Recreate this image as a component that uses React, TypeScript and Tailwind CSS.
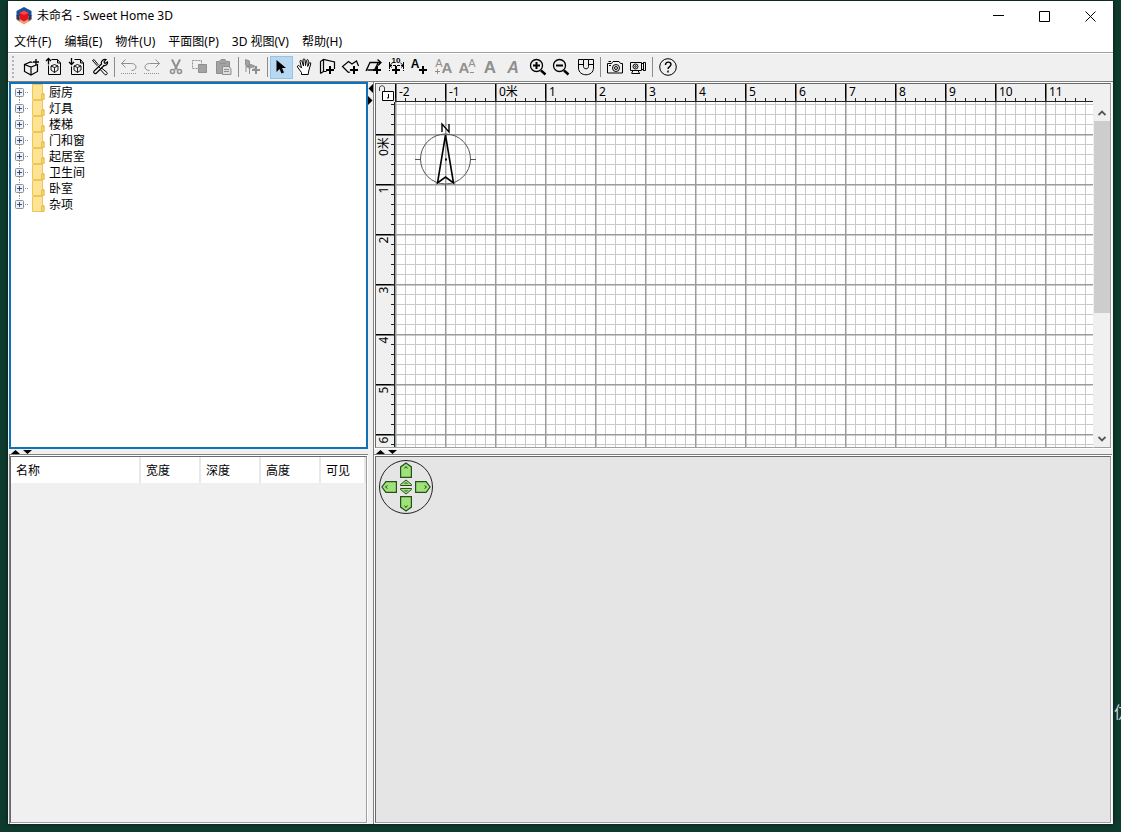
import type { ReactNode } from 'react'
import clsx from 'clsx'

const menus = ['文件(F)', '编辑(E)', '物件(U)', '平面图(P)', '3D 视图(V)', '帮助(H)']

const categories = ['厨房', '灯具', '楼梯', '门和窗', '起居室', '卫生间', '卧室', '杂项']

const columns = [
  { label: '名称', width: 'w-[130px]' },
  { label: '宽度', width: 'w-[60px]' },
  { label: '深度', width: 'w-[60px]' },
  { label: '高度', width: 'w-[60px]' },
  { label: '可见', width: '' },
]

const METER = 50

function Plus({ x, y }: { x: number; y: number }) {
  return <path d={`M${x - 4} ${y}h8M${x} ${y - 4}v8`} strokeWidth="2" />
}

function Cube({ x, y }: { x: number; y: number }) {
  return (
    <path
      d={`M${x} ${y - 3.5}l3.5 1.5v4l-3.5 2.5l-3.5 -2.5v-4zM${x - 3.5} ${y - 2}l3.5 1.5l3.5 -1.5M${x} ${y - 0.5}v5`}
      strokeWidth="0.9"
    />
  )
}

function Letter({ x, y, size, children, italic }: { x: number; y: number; size: number; children: string; italic?: boolean }) {
  return (
    <text
      x={x}
      y={y}
      fontSize={size}
      textAnchor="middle"
      stroke="none"
      fill="currentColor"
      fontWeight="bold"
      fontStyle={italic ? 'italic' : undefined}
      fontFamily="Liberation Sans, sans-serif"
    >
      {children}
    </text>
  )
}

type Tool = { label: string; icon: ReactNode; disabled?: boolean; active?: boolean; wide?: boolean }

const toolGroups: Tool[][] = [
  [
    {
      label: '新建',
      icon: (
        <>
          <path d="M5.5 9.5l6.500 2.500l6.500 -2.500v7l-6.500 3.500l-6.500 -3.500zM12 12v8M5.500 9.500l6 -2.500l2 .5" strokeWidth="1.200" />
          <path d="M17 4v6M14 7h6" strokeWidth="1.300" />
        </>
      ),
    },
    {
      label: '打开',
      icon: (
        <>
          <path d="M9.5 4.5h6l3 3.5v11.5h-12v-9M15.5 4.5v3.5h3" />
          <path d="M6.5 9.5v-6M4 6l2.5 -2.5l2.5 2.5" strokeWidth="1.3" />
          <Cube x={12.5} y={13} />
        </>
      ),
    },
    {
      label: '保存',
      icon: (
        <>
          <path d="M9.5 4.5h6l3 3.5v11.5h-12v-8M15.5 4.5v3.5h3" />
          <path d="M6.5 3v6.5M4 7l2.5 2.5l2.5 -2.5" strokeWidth="1.3" />
          <Cube x={12.5} y={13} />
        </>
      ),
    },
    {
      label: '偏好设置',
      icon: (
        <>
          <path d="M4.500 5.500l1.500 -1l4 5l-1 1zM10 11l3 3" />
          <path d="M13.500 13l5.500 4.500c1 1.500 -1 3 -2.200 2l-4.500 -5z" />
          <path d="M18 4.500l-2 2.500l1 1.500l2.500 -1.500c.5 2 -1.500 4 -3.500 3.500l-7.500 7.500c-1.500 1.500 -3.500 0 -2.500 -2l7.500 -7c-1 -2.500 1.500 -5 4.500 -4.500z" strokeWidth="1.200" />
        </>
      ),
    },
  ],
  [
    {
      label: '撤销',
      disabled: true,
      icon: (
        <>
          <path d="M8.500 4.500l-4 4l4 4M4.500 8.500h10c6 0 6 7 0 7" />
          <path d="M4 18.500h16" strokeDasharray="1 1" />
        </>
      ),
    },
    {
      label: '重做',
      disabled: true,
      icon: (
        <>
          <path d="M15.500 4.500l4 4l-4 4M19.500 8.500h-10c-6 0 -6 7 0 7" />
          <path d="M4 18.500h16" strokeDasharray="1 1" />
        </>
      ),
    },
    {
      label: '剪切',
      disabled: true,
      wide: true,
      icon: (
        <>
          <path d="M9 4.500l5 10M17 4.500l-5 10" strokeWidth="2" />
          <circle cx="9.500" cy="16.500" r="2" strokeWidth="1.600" />
          <circle cx="16.500" cy="16.500" r="2" strokeWidth="1.600" />
        </>
      ),
    },
    {
      label: '复制',
      disabled: true,
      wide: true,
      icon: (
        <>
          <path d="M5.500 5.500h9v8h-9z" strokeDasharray="2 1" />
          <path d="M11.500 9.500h8v8h-8z" fill="#a3a3a3" />
        </>
      ),
    },
    {
      label: '粘贴',
      disabled: true,
      wide: true,
      icon: (
        <>
          <path d="M5.500 6.500h3l1.500 -2h4l1.500 2h3v12h-13z" fill="#a3a3a3" />
          <path d="M9 8.500h6" />
          <path d="M11.500 11.500h6l2.500 2v6h-8.500z" fill="#ddd" />
          <path d="M13 14.500h5M13 16.500h5" />
        </>
      ),
    },
  ],
  [
    {
      label: '添加家具',
      disabled: true,
      icon: (
        <>
          <path d="M4.500 4.500l4 1.500v6l-4 -2zM5 11l5 -1.500l3.500 1.500l-5 2.500zM5 11v6M8.500 13v6M13 11v3" fill="#a3a3a3" />
          <Plus x={15} y={15} />
        </>
      ),
    },
  ],
  [
    {
      label: '选择',
      active: true,
      icon: <path d="M6.500 5v12l3 -3l2 4.500l2.500 -1l-2 -4.500h4z" fill="#000" stroke="none" />,
    },
    {
      label: '平移',
      icon: (
        <path d="M8.500 19.500v-2l-4 -5.500c-.5 -1.500 1 -2 2 -1l2 2l-1.500 -6.500c0 -1.500 1.500 -1.500 2 0l1.500 4.500l-.5 -6c0 -1.500 2 -1.500 2 0l.5 5.500l1 -5c.5 -1.500 2 -1 1.800 .5l-.6 5.500l1.500 -3.500c.5 -1 2 -.5 1.500 1l-2 7l-.5 3.500z" fill="#fff" />
      ),
    },
    {
      label: '创建墙壁',
      icon: (
        <>
          <path d="M4.500 18.500v-12l3 -2l11 2.500v7M7.500 4.500v12l-3 2M7.500 16.500h3M4.500 6.500l3 -2" fill="none" strokeWidth="1.200" />
          <Plus x={14} y={15} />
        </>
      ),
    },
    {
      label: '创建房间',
      icon: (
        <>
          <path d="M9.500 17.500l-6 -6l6 -5l3.500 2.500l4.500 -3l2 5M9.500 17.500l1.500 -.5" strokeWidth="1.200" />
          <Plus x={15} y={15} />
        </>
      ),
    },
    {
      label: '创建多段线',
      icon: (
        <>
          <path d="M4 16l4 -8.500h10.500M15.500 4.500l3.500 3l-3 3M16 8l-3.500 7h-7" strokeWidth="1.300" />
          <Plus x={15} y={15} />
        </>
      ),
    },
    {
      label: '创建尺寸',
      icon: (
        <>
          <Letter x={11} y={8} size={8}>10</Letter>
          <path d="M4 10.500h15M4.500 7v9M18.500 7v9M7.500 8l-3 2.500l3 2.500M15.500 8l3 2.500l-3 2.500" strokeDasharray="3 1" />
          <Plus x={11} y={15} />
        </>
      ),
    },
    {
      label: '添加文本',
      icon: (
        <>
          <Letter x={7} y={13} size={12}>A</Letter>
          <Plus x={15} y={15} />
        </>
      ),
    },
    {
      label: '增大文字',
      disabled: true,
      wide: true,
      icon: (
        <>
          <text x="8" y="12" fontSize="11" textAnchor="middle" fill="currentColor" stroke="none" fontFamily="Liberation Sans, sans-serif">A</text>
          <Letter x={16} y={18} size={15}>A</Letter>
          <path d="M4 16.500h5M6.500 14v5" />
        </>
      ),
    },
    {
      label: '减小文字',
      disabled: true,
      wide: true,
      icon: (
        <>
          <Letter x={9} y={18} size={15}>A</Letter>
          <text x="17" y="12" fontSize="11" textAnchor="middle" fill="currentColor" stroke="none" fontFamily="Liberation Sans, sans-serif">A</text>
          <path d="M15 17.500h4" />
        </>
      ),
    },
    { label: '粗体', disabled: true, icon: <Letter x={11} y={18} size={17}>A</Letter> },
    { label: '斜体', disabled: true, icon: <Letter x={11} y={18} size={16} italic>A</Letter> },
    {
      label: '放大',
      wide: true,
      icon: (
        <>
          <circle cx="11.500" cy="10.500" r="6" strokeWidth="1.300" />
          <path d="M8 10.500h7M11.500 7v7" strokeWidth="2" />
          <path d="M16 15.500l4.500 4" strokeWidth="2.500" />
        </>
      ),
    },
    {
      label: '缩小',
      wide: true,
      icon: (
        <>
          <circle cx="10.500" cy="10.500" r="6" strokeWidth="1.300" />
          <path d="M7 10.500h7" strokeWidth="2" />
          <path d="M15 15.500l4.500 4" strokeWidth="2.500" />
        </>
      ),
    },
    {
      label: '启用磁性',
      wide: true,
      icon: (
        <path d="M5.500 4.500h5v7c0 3 5 3 5 0v-7h5v8.500c0 9 -15 9 -15 0zM5.500 9.500h5M15.500 9.500h5M10.500 4.500h5" />
      ),
    },
  ],
  [
    {
      label: '创建照片',
      icon: (
        <>
          <path d="M4.500 8.500h4l1.500 -2h6l1.500 2h2v9.500h-15zM5.500 6.500h2.500" />
          <circle cx="13" cy="13" r="3.500" />
          <circle cx="13" cy="13" r="1.500" />
          <path d="M6 10.500h2" />
        </>
      ),
    },
    {
      label: '创建视频',
      icon: (
        <>
          <path d="M4.500 7.500h11v8h-11zM15.500 9.500l2 -2h2v8h-2l-2 -2M17.500 7.500v8M7 15.500l-1.500 3M12 15.500l1.500 3M6 18.500h8" />
          <circle cx="9.500" cy="11.500" r="2.500" />
          <circle cx="9.500" cy="11.500" r=".8" />
        </>
      ),
    },
  ],
  [
    {
      label: '帮助',
      wide: true,
      icon: (
        <>
          <circle cx="13" cy="12" r="8.300" />
          <path d="M10.500 10c0 -4 5.500 -3.500 5.500 -.5c0 2 -3 2.300 -3 4.500M13 15.500v2" strokeWidth="1.400" />
        </>
      ),
    },
  ],
]

function ToolButton({ tool }: { tool: Tool }) {
  return (
    <button
      aria-label={tool.label}
      disabled={tool.disabled}
      className={clsx(
        'h-[23px] shrink-0',
        tool.wide ? 'w-6' : 'w-[23px]',
        tool.disabled ? 'text-[#8f8f8f]' : 'text-black',
        tool.active && 'bg-[#b8d8f2] outline outline-[#93c4ea] -outline-offset-1',
      )}
    >
      <svg viewBox="0 1 23 23" className="block w-[23px] h-[23px]" fill="none" stroke="currentColor">
        {tool.icon}
      </svg>
    </button>
  )
}

function TitleBar() {
  return (
    <header className="flex h-[30px] items-center bg-white pl-2">
      <svg viewBox="0 0 16 18" className="w-4 h-[18px]">
        <path d="M8 0l7.500 4v5h-15v-5z" fill="#14529b" />
        <path d="M.5 9l7.500 2l7.500 -2v4l-7.500 4.500l-7.500 -4.500z" fill="#e8a477" />
        <path d="M.5 8v4l3 2v-6zM15.500 8v4l-3 2v-6z" fill="#1f3c66" />
        <path d="M8 3.500l4.500 2.500v6l-4.500 2.500l-4.500 -2.500v-6z" fill="#e3131b" />
        <path d="M8 3.500l4.500 2.500l-4.500 2l-4.500 -2z" fill="#f4474b" />
      </svg>
      <h1 className="ml-[5px] flex-1">未命名 - Sweet Home 3D</h1>
      <button aria-label="最小化" className="flex h-full w-[46px] items-center justify-center">
        <svg viewBox="0 0 11 11" className="w-[11px] h-[11px]" stroke="#000"><path d="M0 4.500h11" /></svg>
      </button>
      <button aria-label="最大化" className="flex h-full w-[46px] items-center justify-center">
        <svg viewBox="0 0 11 11" className="w-[11px] h-[11px]" stroke="#000" fill="none"><path d="M.5 .5h10v10h-10z" /></svg>
      </button>
      <button aria-label="关闭" className="flex h-full w-[46px] items-center justify-center">
        <svg viewBox="0 0 11 11" className="w-[11px] h-[11px]" stroke="#000"><path d="M.5 .5l10 10M10.500 .5l-10 10" /></svg>
      </button>
    </header>
  )
}

function Toolbar() {
  return (
    <div role="toolbar" className="flex h-[30px] items-center border-t border-b border-t-[#a0a0a0] border-b-[#808080] bg-[#f0f0f0] pl-1 shadow-[inset_0_1px_0_#fff]">
      <svg viewBox="0 0 2 24" className="mr-[5px] w-[2px] h-6">
        <path d="M1 1v23" stroke="#b4b4b4" strokeWidth="2" strokeDasharray="2 2" />
      </svg>
      {toolGroups.map((group, i) => (
        <div key={i} className="flex items-center">
          {i > 0 && <span className="ml-[3px] mr-[2px] h-5 w-px bg-[#8c8c8c]" />}
          {group.map((tool) => (
            <ToolButton key={tool.label} tool={tool} />
          ))}
        </div>
      ))}
    </div>
  )
}

function CatalogTree() {
  return (
    <nav className="overflow-hidden border-2 border-[#1071b9] bg-white">
      <ul role="tree">
        {categories.map((name, i) => (
          <li key={name} role="treeitem" className="flex h-4 items-start pl-1">
            <button aria-label={name} className="h-4 w-[17px]">
              <svg viewBox="0 0 17 16" className="block w-[17px] h-4" fill="none">
                {i > 0 && <path d="M4.500 0v4" stroke="#999" strokeDasharray="1 1" />}
                {i < categories.length - 1 && <path d="M4.500 13v3" stroke="#999" strokeDasharray="1 1" />}
                <path d="M10 8.500h4" stroke="#999" strokeDasharray="1 1" />
                <rect x=".5" y="4.500" width="8" height="8" rx="1" fill="#f1f1f1" stroke="#8f8f8f" />
                <path d="M2 8.500h5M4.500 6v5" stroke="#2b4a91" />
              </svg>
            </button>
            <svg viewBox="0 0 13 16" className="w-[13px] h-4">
              <path d="M.5 .5h10v9h1.500v6h-11.500z" fill="#fde394" stroke="#ecc658" />
              <path d="M9.500 10h2.500v5.500h-2.500z" fill="#fbd978" stroke="#e5bb49" />
            </svg>
            <span className="ml-1 pt-px">{name}</span>
          </li>
        ))}
      </ul>
    </nav>
  )
}

function FurnitureTable() {
  return (
    <div className="border-t border-l border-[#808080]">
      <div className="h-full border-t border-r border-b border-white">
        <div className="h-full border border-t-[#696969] border-l-[#696969] border-r-[#a0a0a0] border-b-[#a0a0a0]">
          <table className="w-full table-fixed border-separate border-spacing-0">
            <thead>
              <tr className="h-[26px] bg-white">
                {columns.map((col) => (
                  <th key={col.label} className={clsx('border-r-2 border-[#e8e8e8] pt-[2px] pl-[5px] text-left font-normal', col.width)}>
                    {col.label}
                  </th>
                ))}
              </tr>
            </thead>
            <tbody />
          </table>
        </div>
      </div>
    </div>
  )
}

function SplitButtons() {
  return (
    <div className="flex items-end gap-[3px] pl-[2px]">
      <button aria-label="向上折叠" className="h-1 w-[9px]">
        <svg viewBox="0 0 9 4" className="block w-[9px] h-1"><path d="M0 4l4.500 -4l4.500 4z" /></svg>
      </button>
      <button aria-label="向下折叠" className="h-1 w-[9px]">
        <svg viewBox="0 0 9 4" className="block w-[9px] h-1"><path d="M0 0h9l-4.500 4z" /></svg>
      </button>
    </div>
  )
}

function rulerTicks(vertical: boolean, first: number, count: number) {
  const parts = []
  for (let i = 0; i < count; i++) {
    const p = first + i * 10 + 0.5
    parts.push(vertical ? `M15 ${p}h4` : `M${p} 14v4`)
  }
  return parts.join('')
}

const topMeters = [-2, -1, 0, 1, 2, 3, 4, 5, 6, 7, 8, 9, 10, 11]
const leftMeters = [0, 1, 2, 3, 4, 5, 6]
const meterLabel = (n: number) => (n === 0 ? '0米' : String(n))

function PlanView() {
  return (
    <section className="grid min-h-0 grid-cols-[20px_minmax(0,1fr)_18px] grid-rows-[19px_minmax(0,1fr)] border border-white">
      <button aria-label="锁定基础平面图" className="h-[19px] w-5 border-t border-l border-[#696969]">
        <svg viewBox="0 0 19 18" className="block w-[19px] h-[18px]" fill="none" stroke="#000">
          <path d="M3.500 7v-3c0 -3 5 -3 5 0v3" stroke="#444" />
          <path d="M6.500 7.500h11v9h-11z" fill="#fff" />
          <path d="M12.500 10v4h-1.500" />
        </svg>
      </button>
      <svg className="h-full w-full border-t border-[#696969]" stroke="#222">
        {topMeters.map((n, i) => (
          <g key={n}>
            <path d={`M${i * METER + 0.75} 0v18`} strokeWidth="1.500" stroke="#000" />
            <text x={i * METER + 4} y="12" stroke="none">{meterLabel(n)}</text>
          </g>
        ))}
        <path d={rulerTicks(false, 0, 200)} />
        <path d="M0 17.500h2000" />
      </svg>
      <div className="border-t border-r border-t-[#696969] border-r-[#a0a0a0]" />
      <svg className="h-full w-full border-l border-b border-l-[#696969] border-b-[#a0a0a0]" stroke="#222">
        {leftMeters.map((n) => (
          <g key={n}>
            <path d={`M0 ${n * METER + 32.75}h19`} strokeWidth="1.500" stroke="#000" />
            <text transform={`translate(12 ${n === 0 ? 54 : n * METER + 38}) rotate(-90)`} textAnchor={n === 0 ? 'start' : 'middle'} stroke="none">
              {meterLabel(n)}
            </text>
          </g>
        ))}
        <path d={rulerTicks(true, 2, 200)} />
        <path d="M18.500 0v2000" />
      </svg>
      <svg className="h-full w-full border-b border-[#a0a0a0] bg-white">
        <defs>
          <pattern id="grid" x="0" y="32" width="50" height="50" patternUnits="userSpaceOnUse">
            <path d="M10.500 0v50M20.500 0v50M30.500 0v50M40.500 0v50M0 10.500h50M0 20.500h50M0 30.500h50M0 40.500h50" stroke="#c9c9c9" />
            <path d="M.75 0v50M0 .75h50" stroke="#9b9b9b" strokeWidth="1.500" />
          </pattern>
        </defs>
        <rect width="100%" height="100%" fill="url(#grid)" />
        <g fill="none" stroke="#000">
          <circle cx="50.500" cy="57" r="25" stroke="#555" />
          <path d="M20 57.500h6M75 57.500h6M50.500 82v6" stroke="#555" />
          <path d="M50.500 33l-8 48l8 -6l8 6z" strokeWidth="1.600" />
          <path d="M47 30v-8l7 8v-8" strokeWidth="1.400" />
          <path d="M50 57.500h2" strokeWidth="2" />
        </g>
      </svg>
      <div className="flex flex-col border-l border-r border-b border-l-[#f0f0f0] border-r-[#a0a0a0] border-b-[#a0a0a0] bg-[#f0f0f0] pt-[2px]">
        <button aria-label="向上滚动" className="flex h-[17px] items-center justify-center">
          <svg viewBox="0 0 8 6" className="w-2 h-[6px]" fill="none" stroke="#555" strokeWidth="1.800"><path d="M.5 5l3.500 -3.500l3.500 3.500" /></svg>
        </button>
        <div className="flex-1">
          <div className="h-[62%] bg-[#cdcdcd]" />
        </div>
        <button aria-label="向下滚动" className="flex h-[17px] items-center justify-center">
          <svg viewBox="0 0 8 6" className="w-2 h-[6px]" fill="none" stroke="#555" strokeWidth="1.800"><path d="M.5 1l3.500 3.500l3.500 -3.500" /></svg>
        </button>
      </div>
    </section>
  )
}

function NavArrow({ label, turn }: { label: string; turn: string }) {
  return (
    <button aria-label={label} className={turn}>
      <svg viewBox="0 0 12 16" className="block w-3 h-4" fill="none">
        <path d="M.6 15.400v-10.500l5.400 -4l5.400 4v10.500z" fill="#9fe27b" stroke="#274f1c" strokeWidth="1.200" />
        <path d="M4.500 6.500l1.500 -2l1.500 2" stroke="#274f1c" />
      </svg>
    </button>
  )
}

function View3D() {
  return (
    <section className="border-t border-[#808080]">
      <div className="h-full border border-white">
        <div className="h-full border border-t-[#696969] border-l-[#696969] border-r-[#a0a0a0] border-b-[#a0a0a0] bg-[#e5e5e5] p-[3px]">
          <div className="grid h-[54px] w-[54px] grid-cols-[18px_16px_18px] grid-rows-[18px_16px_18px] place-items-center rounded-full border border-[#222]">
            <span />
            <NavArrow label="向前" turn="" />
            <span />
            <NavArrow label="向左" turn="-rotate-90" />
            <div className="flex flex-col">
              <button aria-label="升高">
                <svg viewBox="0 0 12 8" className="block w-3 h-2"><path d="M.5 6.500v-1l5.500 -4.500l5.500 4.500v1z" fill="#9fe27b" stroke="#274f1c" /><path d="M4.500 5l1.500 -1.500l1.500 1.500" fill="none" stroke="#274f1c" /></svg>
              </button>
              <button aria-label="降低">
                <svg viewBox="0 0 12 8" className="block w-3 h-2"><path d="M.5 1.500v1l5.500 4.500l5.500 -4.500v-1z" fill="#9fe27b" stroke="#274f1c" /><path d="M4.500 3l1.500 1.500l1.500 -1.500" fill="none" stroke="#274f1c" /></svg>
              </button>
            </div>
            <NavArrow label="向右" turn="rotate-90" />
            <span />
            <NavArrow label="向后" turn="rotate-180" />
            <span />
          </div>
        </div>
      </div>
    </section>
  )
}

export default function App() {
  return (
    <div className="relative flex h-screen overflow-hidden bg-[#0f3b2e] px-2 pt-px pb-2 text-xs text-black font-['Noto_Sans','Noto_Sans_CJK_SC',sans-serif]">
      <div className="flex min-w-0 flex-1 flex-col bg-[#f0f0f0] shadow-[0_0_5px_rgba(0,0,0,0.6)]">
        <TitleBar />
        <div role="menubar" className="flex h-[21px] items-center gap-[13px] bg-white pl-[6px]">
          {menus.map((menu) => (
            <button key={menu} role="menuitem">{menu}</button>
          ))}
        </div>
        <Toolbar />

        <main className="grid min-h-0 flex-1 grid-cols-[359px_5px_minmax(0,1fr)] pl-px pr-px">
          <div className="grid min-h-0 grid-rows-[minmax(0,367fr)_5px_minmax(0,370fr)]">
            <CatalogTree />
            <SplitButtons />
            <FurnitureTable />
          </div>
          <div className="flex flex-col gap-[3px] pt-[2px]">
            <button aria-label="向左折叠" className="h-[9px] w-[5px]">
              <svg viewBox="0 0 5 9" className="block w-[5px] h-[9px]"><path d="M5 0v9l-4.500 -4.500z" /></svg>
            </button>
            <button aria-label="向右折叠" className="h-[9px] w-[5px]">
              <svg viewBox="0 0 5 9" className="block w-[5px] h-[9px]"><path d="M0 0v9l4.500 -4.500z" /></svg>
            </button>
          </div>
          <div className="grid min-h-0 grid-rows-[minmax(0,367fr)_5px_minmax(0,370fr)] border-l border-[#808080]">
            <PlanView />
            <SplitButtons />
            <View3D />
          </div>
        </main>
      </div>
      {/* label of a desktop icon, cut off by the screen edge */}
      <span className="absolute right-0 bottom-[108px] w-[7px] overflow-hidden text-base leading-6 whitespace-nowrap text-gray-300">仿</span>
    </div>
  )
}
